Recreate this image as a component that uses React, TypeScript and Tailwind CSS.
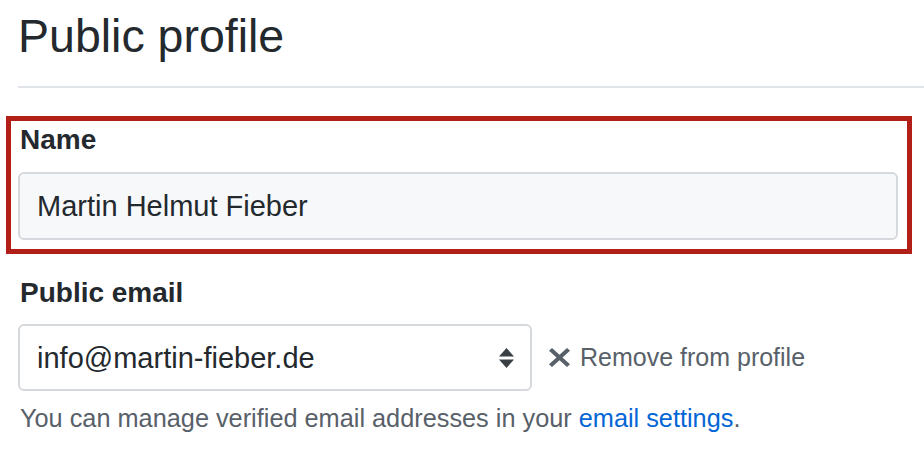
import React from 'react';

function XIcon() {
  return (
    <svg width="21" height="19" viewBox="0.77 2.77 10.46 10.46" preserveAspectRatio="none" className="shrink-0 fill-[#586069]">
      <path d="M7.48 8l3.75 3.75-1.48 1.48L6 9.48l-3.75 3.75-1.48-1.48L4.52 8 .77 4.25l1.48-1.48L6 6.52l3.75-3.75 1.48 1.48L7.48 8z" />
    </svg>
  );
}

function SelectArrows() {
  return (
    <svg width="15" height="20" viewBox="0 0 15 20" className="shrink-0 fill-[#3a3f44]">
      <polygon points="7.5,0 15,8.5 0,8.5" />
      <polygon points="0,11.5 15,11.5 7.5,20" />
    </svg>
  );
}

export default function App() {
  return (
    <div className="w-[924px] h-[452px] bg-white overflow-hidden pl-[18px] text-[#24292e] font-['Liberation_Sans',Arial,sans-serif]">
      {/* Page heading */}
      <div className="pt-[13px] pb-[27px] border-b-2 border-[#e1e4e8]">
        <h1 className="text-[46.5px] leading-[46px] font-normal">Public profile</h1>
      </div>

      {/* Highlighted name field */}
      <div className="mt-[28px] -ml-[12px] w-[906px] border-[5px] border-[#b21f16] pt-[3px] pb-[9px] pl-[7px] pr-[9px]">
        <div className="pl-[2px] text-[28px] leading-[32px] font-bold">Name</div>
        <div className="mt-[16px] h-[68px] rounded-[6px] border-2 border-[#d5d8dc] bg-[#f7f8fa] flex items-center pl-[17px]">
          <span className="text-[29px] leading-[28px]">Martin Helmut Fieber</span>
        </div>
      </div>

      {/* Public email */}
      <div className="mt-[23px] pl-[2px] text-[28px] leading-[32px] font-bold">Public email</div>
      <div className="mt-[15px] flex items-center">
        <div className="w-[514px] h-[67px] rounded-[6px] border-2 border-[#d5d8dc] bg-white flex items-center justify-between pl-[17px] pr-[16px]">
          <span className="text-[29px] leading-[28px]">info@martin-fieber.de</span>
          <SelectArrows />
        </div>
        <div className="ml-[17px] flex items-center gap-[10px] text-[#586069]">
          <XIcon />
          <span className="text-[25px] leading-[25px]">Remove from profile</span>
        </div>
      </div>
      <p className="mt-[15px] pl-[2px] text-[25.3px] leading-[25px] text-[#586069]">
        You can manage verified email addresses in your{' '}
        <a className="text-[#0366d6]">email settings</a>.
      </p>
    </div>
  );
}
